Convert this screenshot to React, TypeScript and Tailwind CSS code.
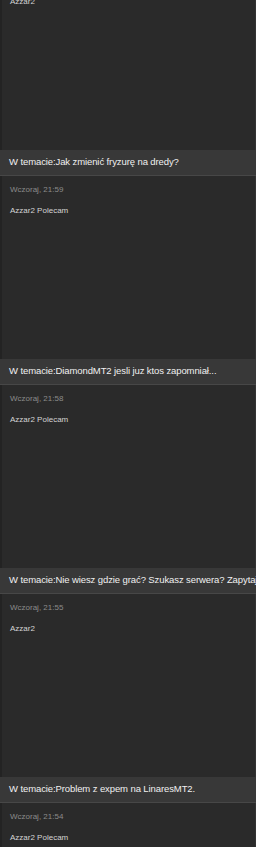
import React from "react";

type Post = { title: string; date: string; body: string };

const posts: Post[] = [
  { title: "W temacie:Jak zmienić fryzurę na dredy?", date: "Wczoraj, 21:59", body: "Azzar2 Polecam" },
  { title: "W temacie:DiamondMT2 jesli juz ktos zapomniał...", date: "Wczoraj, 21:58", body: "Azzar2 Polecam" },
  { title: "W temacie:Nie wiesz gdzie grać? Szukasz serwera? Zapytaj tutaj!", date: "Wczoraj, 21:55", body: "Azzar2" },
  { title: "W temacie:Problem z expem na LinaresMT2.", date: "Wczoraj, 21:54", body: "Azzar2 Polecam" },
];

function Content({ date, body }: { date?: string; body: string }) {
  return (
    <div className="h-[183px] border-l-2 border-r border-l-[#232323] border-r-[#333333] bg-[#2a2a2a] pl-[8px] pt-[8px]">
      {date && <div className="h-[12px] text-[8px] leading-[12px] text-[#8a8a8a]">{date}</div>}
      <div className="mt-[9px] h-[12px] text-[8px] leading-[12px] text-[#d4d4d4]">{body}</div>
    </div>
  );
}

export default function App() {
  return (
    <div
      className="h-[847px] w-[256px] overflow-hidden bg-[#2a2a2a]"
      style={{ fontFamily: '"Liberation Sans", Arial, sans-serif' }}
    >
      <div className="-mt-[33px]">
        <Content date="Wczoraj, 22:01" body="Azzar2" />
        {posts.map((p) => (
          <div key={p.date}>
            <div className="flex h-[26px] items-center overflow-hidden whitespace-nowrap border-b border-[#474747] bg-[#383838] pl-[9px] text-[9.5px] tracking-[-0.1px] text-[#f0f0f0]">
              {p.title}
            </div>
            <Content date={p.date} body={p.body} />
          </div>
        ))}
      </div>
    </div>
  );
}
